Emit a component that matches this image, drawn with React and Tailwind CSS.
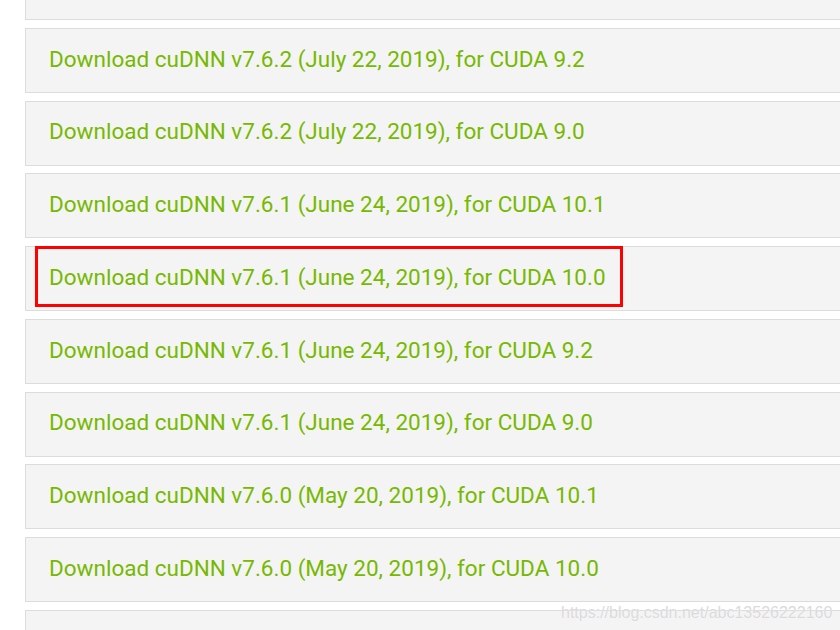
const rows = [
  "",
  "Download cuDNN v7.6.2 (July 22, 2019), for CUDA 9.2",
  "Download cuDNN v7.6.2 (July 22, 2019), for CUDA 9.0",
  "Download cuDNN v7.6.1 (June 24, 2019), for CUDA 10.1",
  "Download cuDNN v7.6.1 (June 24, 2019), for CUDA 10.0",
  "Download cuDNN v7.6.1 (June 24, 2019), for CUDA 9.2",
  "Download cuDNN v7.6.1 (June 24, 2019), for CUDA 9.0",
  "Download cuDNN v7.6.0 (May 20, 2019), for CUDA 10.1",
  "Download cuDNN v7.6.0 (May 20, 2019), for CUDA 10.0",
  "",
];

export default function App() {
  return (
    <div className="relative w-[840px] h-[630px] overflow-hidden bg-white font-['Roboto',sans-serif]">
      <div className="flex flex-col gap-[7.75px] pl-[25px] -mt-[45px]">
        {rows.map((text, i) => (
          <div
            key={i}
            className="flex items-center h-[65px] w-[840px] shrink-0 bg-[#f4f4f4] border border-[#dcdcdc] pl-[23px] pb-[3px]"
          >
            <span className="text-[22.5px] text-[#76b900] leading-none">{text}</span>
          </div>
        ))}
      </div>

      {/* highlight box */}
      <div className="absolute left-[35px] top-[246px] w-[588px] h-[61px] border-[3px] border-[#ff0000]" />

      {/* watermark */}
      <div className="absolute left-[561px] top-[601px] text-[16px] text-[#dadada] font-['Liberation_Sans',sans-serif] [text-shadow:0_0_1px_#fff]">
        https://blog.csdn.net/abc13526222160
      </div>
    </div>
  );
}
